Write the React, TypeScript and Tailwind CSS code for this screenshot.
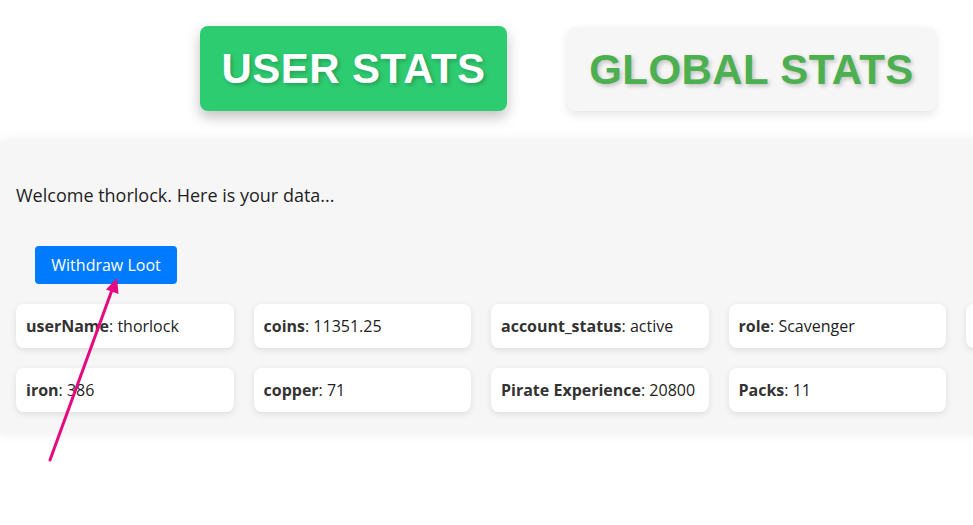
import React from 'react';

const stats: { label: string; value: string }[] = [
  { label: 'userName', value: 'thorlock' },
  { label: 'coins', value: '11351.25' },
  { label: 'account_status', value: 'active' },
  { label: 'role', value: 'Scavenger' },
  { label: '', value: '' },
  { label: 'iron', value: '386' },
  { label: 'copper', value: '71' },
  { label: 'Pirate Experience', value: '20800' },
  { label: 'Packs', value: '11' },
];

function StatCard({ label, value }: { label: string; value: string }) {
  return (
    <div className="h-[44px] bg-white rounded-lg shadow-[0_2px_6px_rgba(0,0,0,0.1)] flex items-center px-[10px] text-[16px] text-[#222] whitespace-nowrap">
      {label && (
        <>
          <span className="font-bold text-[#333]">{label}</span>: {value}
        </>
      )}
    </div>
  );
}

export default function App() {
  return (
    <div className="relative w-full h-[525px] overflow-hidden bg-white font-['Open_Sans',sans-serif]">
      <div className="min-w-[1210px]">
        <div className="flex gap-[60px] pl-[200px] pt-[26px] font-['Liberation_Sans',Arial,sans-serif]">
          <button className="w-[307px] h-[85px] rounded-lg bg-[#2ecc71] text-white text-[42px] font-bold tracking-[0.4px] shadow-[0_6px_14px_rgba(0,0,0,0.25)] [text-shadow:2px_2px_4px_rgba(0,0,0,0.22)]">
            USER STATS
          </button>
          <button className="w-[369px] h-[84px] mt-px rounded-lg bg-[#f6f6f6] text-[#4caf50] text-[42px] font-bold tracking-[0.4px] shadow-[0_4px_10px_rgba(0,0,0,0.1)] [text-shadow:2px_2px_4px_rgba(0,0,0,0.22)]">
            GLOBAL STATS
          </button>
        </div>

        <div className="mt-[30px] bg-[#f6f6f6] shadow-[0_0_12px_rgba(0,0,0,0.08)] px-4 pt-[42px] pb-[21px]">
          <p className="text-[18px] leading-[24px] text-[#1e1e1e]">Welcome thorlock. Here is your data...</p>
          <button className="mt-[39px] ml-[19px] w-[142px] h-[38px] rounded bg-[#007bff] text-white text-[16px]">
            Withdraw Loot
          </button>
          <div className="mt-[20px] grid grid-cols-[repeat(5,217.5px)] gap-5">
            {stats.map((s, i) => (
              <StatCard key={i} label={s.label} value={s.value} />
            ))}
          </div>
        </div>
      </div>

      <svg className="absolute inset-0 pointer-events-none" width="973" height="525">
        <line x1="50" y1="460" x2="112" y2="290" stroke="#e6087f" strokeWidth="3" strokeLinecap="round" />
        <polygon points="117,278 118.5,294 106,289.5" fill="#e6087f" />
      </svg>
    </div>
  );
}
